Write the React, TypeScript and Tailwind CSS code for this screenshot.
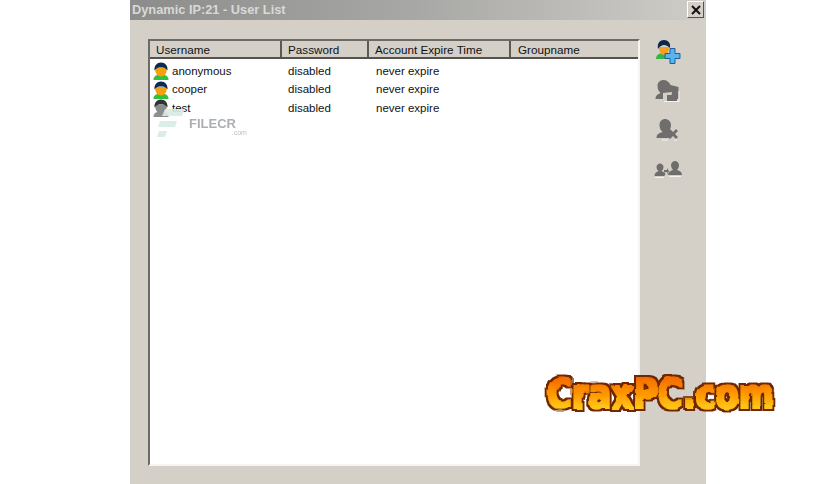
const font = { fontFamily: "'Liberation Sans', Arial, sans-serif" };

const columns = [
  { label: "Username", width: "w-[132px]", pad: "pl-[6px]" },
  { label: "Password", width: "w-[87px]", pad: "pl-[6px]" },
  { label: "Account Expire Time", width: "w-[142px]", pad: "pl-[6px]" },
  { label: "Groupname", width: "w-[127px]", pad: "pl-[7px]" },
];

const users = [
  { name: "anonymous", active: true },
  { name: "cooper", active: true },
  { name: "test", active: false },
];

function UserIcon({ active }: { active: boolean }) {
  const hair = active ? "#0b2a52" : "#303436";
  const face = active ? "#f5a00c" : "#8c8c8c";
  const body = active ? "#2fc23c" : "#8e8e8e";
  return (
    <svg width="16" height="18" viewBox="0 0 16 18" className="shrink-0">
      <path d="M0.500 18c0-4 3-5.500 7.500-5.500s7.500 1.500 7.500 5.500z" fill={body} />
      <path d="M2 6c0 5 2.500 8.500 6 8.500S14 11 14 6z" fill={face} />
      <path d="M1.500 8.500C1 3.500 4 0.500 8 0.500s7 3 6.500 8C13 6 10.500 5.500 8 5.500S3 6 1.500 8.500z" fill={hair} />
    </svg>
  );
}

function AddUserIcon() {
  return (
    <svg width="26" height="25" viewBox="0 0 26 25">
      <path d="M1 20c0-4 3-6 8-6s7 2 7 6z" fill="#35b54a" />
      <path d="M4 8c0 5 2 8 5 8s5-3 5-8z" fill="#f5a020" />
      <path d="M3 10C2 4 5 1 9 1s7 3 6 8c-2-2-4-3-6-3s-4 1-6 4z" fill="#0c2748" />
      <path d="M15 9.500h5v5h5v5h-5v5h-5v-5h-5v-5h5z" fill="#58b4ec" stroke="#1c5f9c" strokeWidth="1" />
    </svg>
  );
}

function ImportUserIcon() {
  return (
    <svg width="26" height="24" viewBox="0 0 26 24">
      <path d="M0.500 20c0-4 3-5 5-6-2-2-3-4-3-7 0-4 3-6 6-6s6 2 7 5l8 2v12H8z" fill="#706e6c" />
      <path d="M8 14l9-1-1 8H8z" fill="#d4d0c8" />
      <path d="M12 16h10v6H12z" fill="#706e6c" />
      <path d="M9 22.500h15V12" fill="none" stroke="#f4f3f0" strokeWidth="1" />
    </svg>
  );
}

function DeleteUserIcon() {
  return (
    <svg width="24" height="24" viewBox="0 0 24 24">
      <path d="M0.500 20c0-4 3-5 6-6-2-2-3-4-3-7 0-4 3-6 5.500-6S15 3 15 7c0 2-.5 4-2 6l3 3-3 4z" fill="#706e6c" />
      <path d="M14 11l3 3 3-3 2 2-3 3 3 3-2 2-3-3-3 3-2-2 3-3-3-3z" fill="#706e6c" />
      <path d="M6 22h6M18 22.500l3-1" stroke="#f4f3f0" strokeWidth="1" />
    </svg>
  );
}

function GroupIcon() {
  return (
    <svg width="28" height="18" viewBox="0 0 28 18">
      <path d="M0.500 16c0-3 2-4 4-5-1-1-2-2-2-4 0-2 2-3.500 3.500-3.500S9.500 5 9.500 7c0 2-1 3-2 4l4 2-1 3z" fill="#706e6c" />
      <path d="M10 10h3V8l2 3-2 3v-2h-3z" fill="#706e6c" />
      <path d="M14 15c0-3 2-4 5-5-1-1-2-3-2-5 0-2 2-4 4-4s4 2 4 4c0 2-1 4-2 5 3 1 5 2 5 5z" fill="#706e6c" />
      <path d="M1 17.500h9M15 16.500h12" stroke="#f4f3f0" strokeWidth="1" />
    </svg>
  );
}

function CraxLogo() {
  return (
    <svg width="290" height="50" viewBox="0 0 290 50">
      <defs>
        <linearGradient id="fire" x1="0" y1="0.1" x2="0" y2="0.9">
          <stop offset="0" stopColor="#f06000" />
          <stop offset="0.55" stopColor="#ff9a00" />
          <stop offset="1" stopColor="#ffd820" />
        </linearGradient>
        <filter id="flame" x="-5%" y="-20%" width="110%" height="140%">
          <feTurbulence type="fractalNoise" baseFrequency="0.09 0.16" numOctaves="2" seed="4" result="noise" />
          <feDisplacementMap in="SourceGraphic" in2="noise" scale="4" result="wavy" />
          <feMorphology in="wavy" operator="dilate" radius="0.8" result="fat" />
          <feMorphology in="fat" operator="dilate" radius="1.6" result="wide" />
          <feFlood floodColor="#702800" />
          <feComposite in2="wide" operator="in" result="outline" />
          <feMerge>
            <feMergeNode in="outline" />
            <feMergeNode in="fat" />
          </feMerge>
        </filter>
      </defs>
      <text
        x="6"
        y="40"
        textLength="227"
        lengthAdjust="spacingAndGlyphs"
        fontFamily="'DejaVu Sans', sans-serif"
        fontWeight="700"
        fontSize="41"
        fill="url(#fire)"
        filter="url(#flame)"
      >
        CraxPC.com
      </text>
    </svg>
  );
}

export default function App() {
  return (
    <div className="relative h-[484px] w-[836px] overflow-hidden bg-white" style={font}>
      <div className="ml-[130px] flex h-[484px] w-[576px] flex-col bg-[#d4d0c8]">
        {/* Title bar */}
        <div className="flex h-[20px] items-center justify-between bg-gradient-to-r from-[#8c8c8c] via-[#a8a8a6] to-[#cfcdc8] pl-[2px] pr-[2px]">
          <span className="text-[12.800px] font-bold text-[#d9d9d6]">Dynamic IP:21 - User List</span>
          <button className="mb-[1px] flex h-[17px] w-[17px] items-center justify-center border border-[#55524c] border-t-white border-l-white bg-[#d4d0c8]">
            <svg width="10" height="10" viewBox="0 0 10 10">
              <path d="M1 1l8 8M9 1l-8 8" stroke="#111" strokeWidth="2" />
            </svg>
          </button>
        </div>

        <div className="flex pl-[18px] pt-[19px]">
          {/* User list */}
          <div className="h-[427px] w-[492px] border-2 border-[#6c6a66] border-b-[#f6f5f2] border-r-[#f6f5f2] bg-white">
            <div className="flex h-[18px] border-b-2 border-[#55534f] bg-[#d4d0c8]">
              {columns.map((col) => (
                <div
                  key={col.label}
                  className={`${col.width} ${col.pad} border-r-2 border-[#5c5a56] text-[11.700px] leading-[18px] text-[#111] last:border-r-0`}
                >
                  {col.label}
                </div>
              ))}
            </div>
            <div className="pl-[3px] pt-[3px]">
              {users.map((user) => (
                <div key={user.name} className="flex h-[18.500px] items-center text-[11.500px] text-[#111]">
                  <div className="flex w-[128px] items-center gap-[3px]">
                    <UserIcon active={user.active} />
                    <span>{user.name}</span>
                  </div>
                  <span className="w-[87px] pl-[7px]">disabled</span>
                  <span className="pl-[8px]">never expire</span>
                </div>
              ))}
            </div>
          </div>

          {/* Toolbar */}
          <div className="ml-[13px] -mt-[1px] flex w-[30px] flex-col items-center">
            <div className="flex h-[26px] items-center"><AddUserIcon /></div>
            <div className="mt-[14px] flex h-[26px] items-center"><ImportUserIcon /></div>
            <div className="mt-[13px] flex h-[26px] items-center"><DeleteUserIcon /></div>
            <div className="mt-[13px] flex h-[26px] items-center"><GroupIcon /></div>
          </div>
        </div>
      </div>

      {/* FILECR watermark */}
      <div className="absolute left-[157px] top-[107px] flex opacity-90">
        <svg width="28" height="32" viewBox="0 0 28 32">
          <path d="M8 2h20l-3 7H5zM3 14h17l-2 6H1zM2 24h8l-2 6H0z" fill="#d6ece4" />
        </svg>
        <div className="relative ml-[4px] pt-[8px] text-[13px] font-bold leading-[17px] text-[#a3a7ab]">
          FILECR
          <span className="absolute right-[-11px] top-[21px] text-[7px] font-normal leading-[9px] text-[#b5b8bb]">.com</span>
        </div>
      </div>

      {/* CraxPC badge */}
      <div className="absolute left-[541px] top-[368px]">
        <CraxLogo />
      </div>
    </div>
  );
}
